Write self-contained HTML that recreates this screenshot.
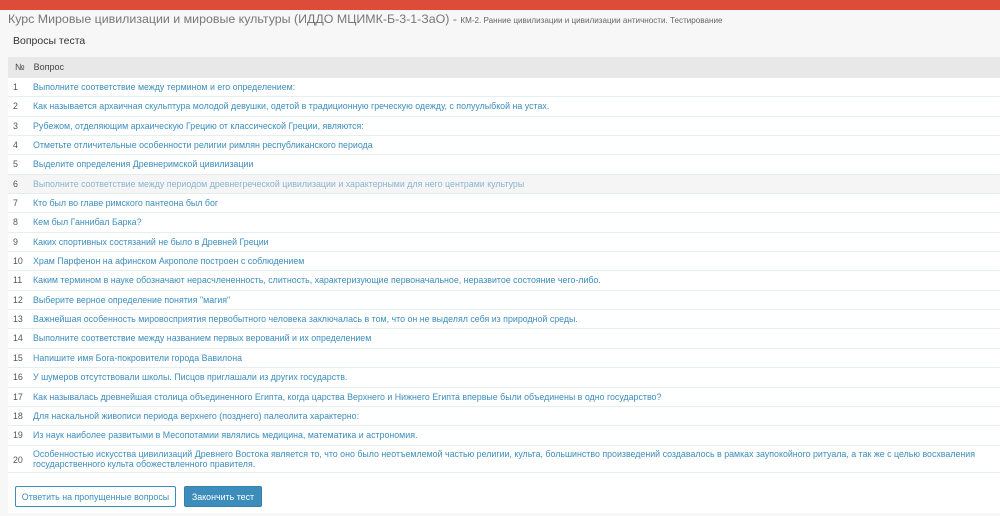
<!DOCTYPE html><html><head><meta charset="utf-8"><style>
body{margin:0;width:1000px;height:516px;overflow:hidden;background:#f7f7f7;font-family:"Liberation Sans",sans-serif;}
.bar{height:10px;background:#dd4b39}
.title{position:absolute;left:8px;top:12px;font-size:12.4px;color:#777;white-space:nowrap}
.title small{font-size:8.1px;color:#666}
.tbl{position:absolute;left:8px;top:57px;width:992px;background:#fff;height:456px}
.hd{height:21px;background:#e8e8e8;font-size:9px;color:#444;line-height:21px}
.r{height:19.35px;line-height:19.35px;border-bottom:1px solid #e8eef0;box-sizing:border-box;font-size:8.85px;color:#3c8dbc;position:relative;white-space:nowrap}
.n{position:absolute;left:5px;color:#555}
.q{position:absolute;left:25px}
.g{background:#f5f5f5;color:#8ab4d0}
.btn{position:absolute;top:486px;height:21px;font-size:8.9px;line-height:21px;text-align:center;border-radius:2px;box-sizing:border-box;white-space:nowrap}
</style></head><body>
<div class="bar"></div>
<div class="title">Курс Мировые цивилизации и мировые культуры (ИДДО МЦИМК-Б-3-1-ЗаО) - <small>КМ-2. Ранние цивилизации и цивилизации античности. Тестирование</small></div>
<div class="tbl">
<div style="position:absolute;left:5px;top:-22px;font-size:10.5px;color:#333">Вопросы теста</div>
<div class="hd"><span style="margin-left:7px">№</span><span style="margin-left:9px">Вопрос</span></div>
<div class="r"><span class="n">1</span><span class="q">Выполните соответствие между термином и его определением:</span></div>
<div class="r"><span class="n">2</span><span class="q">Как называется архаичная скульптура молодой девушки, одетой в традиционную греческую одежду, с полуулыбкой на устах.</span></div>
<div class="r"><span class="n">3</span><span class="q">Рубежом, отделяющим архаическую Грецию от классической Греции, являются:</span></div>
<div class="r"><span class="n">4</span><span class="q">Отметьте отличительные особенности религии римлян республиканского периода</span></div>
<div class="r"><span class="n">5</span><span class="q">Выделите определения Древнеримской цивилизации</span></div>
<div class="r g"><span class="n">6</span><span class="q">Выполните соответствие между периодом древнегреческой цивилизации и характерными для него центрами культуры</span></div>
<div class="r"><span class="n">7</span><span class="q">Кто был во главе римского пантеона был бог</span></div>
<div class="r"><span class="n">8</span><span class="q">Кем был Ганнибал Барка?</span></div>
<div class="r"><span class="n">9</span><span class="q">Каких спортивных состязаний не было в Древней Греции</span></div>
<div class="r"><span class="n">10</span><span class="q">Храм Парфенон на афинском Акрополе построен с соблюдением</span></div>
<div class="r"><span class="n">11</span><span class="q">Каким термином в науке обозначают нерасчлененность, слитность, характеризующие первоначальное, неразвитое состояние чего-либо.</span></div>
<div class="r"><span class="n">12</span><span class="q">Выберите верное определение понятия "магия"</span></div>
<div class="r"><span class="n">13</span><span class="q">Важнейшая особенность мировосприятия первобытного человека заключалась в том, что он не выделял себя из природной среды.</span></div>
<div class="r"><span class="n">14</span><span class="q">Выполните соответствие между названием первых верований и их определением</span></div>
<div class="r"><span class="n">15</span><span class="q">Напишите имя Бога-покровители города Вавилона</span></div>
<div class="r"><span class="n">16</span><span class="q">У шумеров отсутствовали школы. Писцов приглашали из других государств.</span></div>
<div class="r"><span class="n">17</span><span class="q">Как называлась древнейшая столица объединенного Египта, когда царства Верхнего и Нижнего Египта впервые были объединены в одно государство?</span></div>
<div class="r"><span class="n">18</span><span class="q">Для наскальной живописи периода верхнего (позднего) палеолита характерно:</span></div>
<div class="r"><span class="n">19</span><span class="q">Из наук наиболее развитыми в Месопотамии являлись медицина, математика и астрономия.</span></div>
<div class="r" style="height:27px;line-height:10px"><span class="n" style="top:9px">20</span><span class="q" style="top:3px">Особенностью искусства цивилизаций Древнего Востока является то, что оно было неотъемлемой частью религии, культа, большинство произведений создавалось в рамках заупокойного ритуала, а так же с целью восхваления<br>государственного культа обожествленного правителя.</span></div>
</div>
<div class="btn" style="left:15px;width:161px;border:1px solid #3c8dbc;color:#3c8dbc;background:#fff">Ответить на пропущенные вопросы</div>
<div class="btn" style="left:184px;width:78px;background:#3c8dbc;color:#fff;border:1px solid #367fa9">Закончить тест</div>
</body></html>
